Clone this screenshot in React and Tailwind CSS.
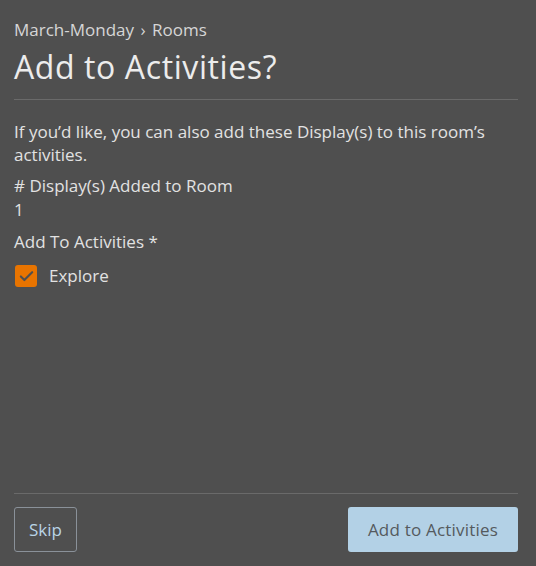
import { Check } from 'lucide-react';

export default function App() {
  return (
    <div
      className="flex h-[566px] w-[536px] flex-col bg-[#4f4f4f] pr-[18px] pl-[14px] text-[#e2e2e2]"
      style={{ fontFamily: '"Open Sans", sans-serif' }}
    >
      <div className="pt-[18px]">
        <div className="text-[17px] leading-[24px] text-[#d6d6d6]">
          March-Monday <span className="mx-[2px]">›</span> Rooms
        </div>
        <h1 className="mt-[5px] text-[32px] leading-[40px] font-normal tracking-[0.6px] text-[#ececec]">
          Add to Activities?
        </h1>
      </div>
      <div className="mt-[12px] border-t border-[#6a6a6a]" />

      <div className="flex-1 pt-[20px]">
        <p className="text-[17px] leading-[23px]">
          If you’d like, you can also add these Display(s) to this room’s activities.
        </p>
        <div className="mt-[8px] text-[17px] leading-[23px]">
          # Display(s) Added to Room
        </div>
        <div className="mt-[1px] text-[17px] leading-[23px]">1</div>
        <div className="mt-[9px] text-[17px] leading-[23px]">Add To Activities *</div>
        <label className="mt-[12px] flex items-center gap-[12px] pl-px">
          <span className="flex h-[22px] w-[22px] items-center justify-center rounded-[3px] bg-[#e87400]">
            <Check size={17} strokeWidth={3} className="text-[#4f4f4f]" />
          </span>
          <span className="text-[17px] leading-[22px]">Explore</span>
        </label>
      </div>

      <div className="border-t border-[#6a6a6a]" />
      <div className="flex items-center justify-between pt-[13px] pb-[14px]">
        <button className="h-[45px] rounded-[3px] border border-[#8a9199] px-[14px] text-[17px] text-[#b9d4e6]">
          Skip
        </button>
        <button className="h-[45px] rounded-[3px] bg-[#b3d1e6] px-[20px] text-[17px] tracking-[0.2px] text-[#555a5e]">
          Add to Activities
        </button>
      </div>
    </div>
  );
}
